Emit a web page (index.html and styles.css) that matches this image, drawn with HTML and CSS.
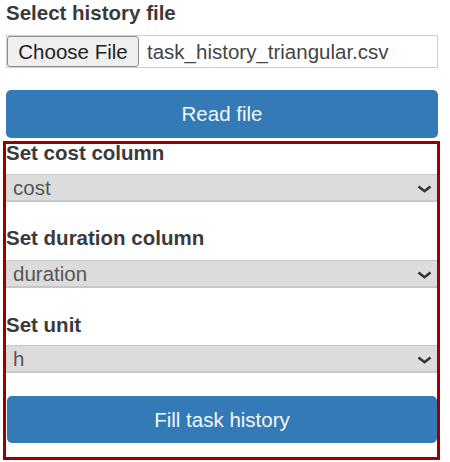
FILE: index.html
```html
<!DOCTYPE html>
<html>
<head>
<meta charset="utf-8">
<link rel="stylesheet" href="styles.css">
</head>
<body>
<div class="page">
  <div class="title">Select history file</div>
  <div class="file">
    <button class="file-btn" type="button">Choose File</button>
    <span class="file-name">task_history_triangular.csv</span>
  </div>
  <button class="btn read" type="button">Read file</button>
  <div class="panel">
    <div class="label">Set cost column</div>
    <div class="select-wrap">
      <select class="select"><option>cost</option></select>
      <svg class="chev" width="15" height="8" viewBox="0 0 15 8"><path d="M1.5 1.5 L7.5 6.2 L13.5 1.5" fill="none" stroke="#333" stroke-width="2.6"/></svg>
    </div>
    <div class="label l2">Set duration column</div>
    <div class="select-wrap">
      <select class="select"><option>duration</option></select>
      <svg class="chev" width="15" height="8" viewBox="0 0 15 8"><path d="M1.5 1.5 L7.5 6.2 L13.5 1.5" fill="none" stroke="#333" stroke-width="2.6"/></svg>
    </div>
    <div class="label l3">Set unit</div>
    <div class="select-wrap">
      <select class="select"><option>h</option></select>
      <svg class="chev" width="15" height="8" viewBox="0 0 15 8"><path d="M1.5 1.5 L7.5 6.2 L13.5 1.5" fill="none" stroke="#333" stroke-width="2.6"/></svg>
    </div>
    <button class="btn fill" type="button">Fill task history</button>
  </div>
</div>
</body>
</html>
```

FILE: styles.css
```css
html, body {
  margin: 0;
  padding: 0;
  background: #fff;
}
body {
  font-family: "Liberation Sans", Arial, sans-serif;
  color: #333;
}
.page {
  width: 450px;
  display: flex;
  flex-direction: column;
  padding-top: 2px;
}
.title {
  margin-left: 6px;
  font-size: 20.5px;
  font-weight: bold;
  line-height: 22px;
  height: 22px;
  color: #3a3a3a;
}
.file {
  margin: 11px 0 0 6px;
  width: 430px;
  height: 31px;
  border: 1px solid #cfcfcf;
  display: flex;
  align-items: stretch;
}
.file-btn {
  width: 132px;
  margin: 0;
  padding: 0;
  font-family: "Liberation Sans", Arial, sans-serif;
  font-size: 20.5px;
  color: #222;
  background: #efefef;
  border: 1px solid #8f8f8f;
  border-radius: 3px;
}
.file-name {
  margin-left: 8px;
  font-size: 20.5px;
  line-height: 31px;
  color: #444;
}
.btn {
  display: block;
  margin: 0;
  padding: 0;
  border: none;
  background: #337ab7;
  color: #f4f7fb;
  font-family: "Liberation Sans", Arial, sans-serif;
  font-size: 20.5px;
  border-radius: 5px;
}
.read {
  margin: 22px 0 0 6px;
  width: 432px;
  height: 48px;
}
.panel {
  margin: 3px 0 0 3px;
  width: 431px;
  height: 313px;
  border: 3px solid #9b0000;
  display: flex;
  flex-direction: column;
}
.label {
  font-size: 20.5px;
  font-weight: bold;
  line-height: 18px;
  height: 18px;
  color: #3a3a3a;
  margin-bottom: 12px;
}
.l2 {
  margin-top: 27px;
  margin-bottom: 13px;
}
.l3 {
  margin-top: 28px;
  margin-bottom: 11px;
}
.select-wrap {
  position: relative;
  width: 431px;
  height: 28px;
}
.select {
  appearance: none;
  -webkit-appearance: none;
  display: block;
  width: 100%;
  height: 28px;
  margin: 0;
  padding: 0 0 0 6px;
  border: none;
  border-top: 1px solid #c6c6c6;
  border-bottom: 2px solid #c6c6c6;
  border-left: 1px solid #d6d6d6;
  background: #dcdcdc;
  color: #555;
  font-family: "Liberation Sans", Arial, sans-serif;
  font-size: 20.5px;
  border-radius: 0;
}
.chev {
  position: absolute;
  right: 5px;
  top: 11px;
  pointer-events: none;
}
.fill {
  margin: 23px 0 0 1px;
  width: 430px;
  height: 47px;
}
```
